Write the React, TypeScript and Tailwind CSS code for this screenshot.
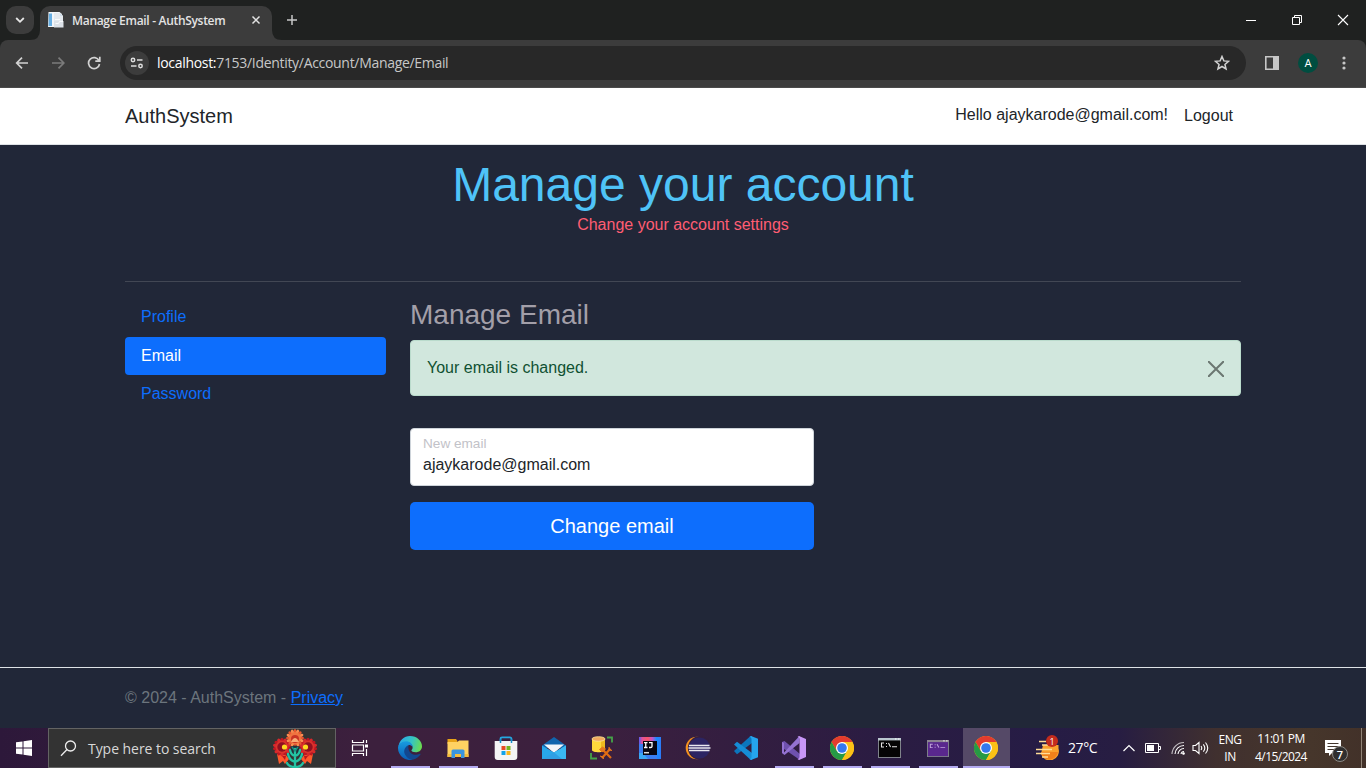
import React, { useId } from "react";

type Kids = { children: React.ReactNode };
const ui = "font-['Open_Sans','Noto_Sans',sans-serif]";

function Chrome() {
  return (
    <svg width="24" height="24" viewBox="0 0 24 24">
      <circle cx="12" cy="12" r="12" fill="#fbc116" />
      <path d="M12 6h10.4A12 12 0 0 0 1.6 6l5.2 9z" fill="#e33b2e" />
      <path d="M1.6 6A12 12 0 0 0 12 24l5.2-9-10.4 0z" fill="#269a45" />
      <path d="M22.4 6A12 12 0 0 1 12 24l5.2-9A6 6 0 0 0 12 6z" fill="#fbc116" />
      <circle cx="12" cy="12" r="6" fill="#fff" />
      <circle cx="12" cy="12" r="4.8" fill="#3478ee" />
    </svg>
  );
}

function Edge() {
  const id = useId();
  return (
    <svg width="24" height="24" viewBox="0 0 24 24">
      <defs>
        <linearGradient id={id + "a"} x1="0" y1=".3" x2="1" y2=".5">
          <stop offset="0" stopColor="#2aa8e8" /><stop offset=".55" stopColor="#35c4c4" /><stop offset="1" stopColor="#6bdc50" />
        </linearGradient>
        <linearGradient id={id + "b"} x1="0" y1="0" x2="0" y2="1">
          <stop offset="0" stopColor="#189ce0" /><stop offset="1" stopColor="#0a5cb5" />
        </linearGradient>
      </defs>
      <path d="M.5 10.500C1.300 4.500 6 0 12 0c7 0 12 5 12 10.300 0 3.900-3 6-6.300 6-2.600 0-4.300-.9-4.300-1.700 0-.7 1.200-1.200 1.200-3.100C14.600 8.200 11.500 6 8 6 4.500 6 2 8 .5 10.500z" fill={`url(#${id}a)`} />
      <path d="M0 12c0-3.500 3.700-6.700 8-6.700 3.500 0 6.600 2.300 6.600 5.600C13.500 9.500 12.400 9 11 9c-3 1.200-4.300 5-3 8.500 1 3 3.500 5.500 7 6.100A12 12 0 0 1 0 12z" fill={`url(#${id}b)`} />
      <path d="M10.400 9.300C6.500 11 5 15.500 7.300 19c2 3.300 5 4.900 8.200 4.500 2.800-.7 5.500-2.500 7.100-5.200.2-.5-.2-.7-.6-.5-5.500 2.700-12.500.2-11.600-8.500z" fill="#12478f" />
    </svg>
  );
}

function Folder() {
  return (
    <svg width="24" height="24" viewBox="0 0 24 24">
      <path d="M1.500 3H10l1.500 2v3h-10z" fill="#e8a317" />
      <path d="M1.500 6h10l1.500-1.500h9.500V21h-21z" fill="#ffd262" />
      <path d="M1.500 18h21v3h-21z" fill="#f6bc3c" />
      <path d="M5.500 22v-7q0-1.500 1.500-1.500h10q1.500 0 1.500 1.500v7H15v-4H9v4z" fill="#3a94df" />
    </svg>
  );
}

function Store() {
  return (
    <svg width="24" height="24" viewBox="0 0 24 24">
      <path d="M6.500 6.500V3q0-1.700 1.700-1.700h7.600q1.700 0 1.700 1.700v3.500" fill="none" stroke="#25a7e0" strokeWidth="1.700" />
      <path d="M.7 5h22.600v16q0 3-3 3H3.700q-3 0-3-3z" fill="#f4f4f4" />
      <path d="M6.500 3v4M17.500 3v4" stroke="#1590cc" strokeWidth="1.500" />
      <path d="M7.500 10h4v4h-4z" fill="#e84b23" /><path d="M12.500 10h4v4h-4z" fill="#75b51d" />
      <path d="M7.500 15h4v4h-4z" fill="#13a3e8" /><path d="M12.500 15h4v4h-4z" fill="#f7b51b" />
    </svg>
  );
}

function Mail() {
  return (
    <svg width="26" height="24" viewBox="0 0 26 24">
      <path d="M1 9.500 13 1l12 8.500V12H1z" fill="#1165ad" />
      <path d="M3 8.500h20L13 17z" fill="#f3f6f9" />
      <path d="M1 9.500 13 16.500 25 9.500V23H1z" fill="#28a7ea" />
      <path d="M13 16.500 25 9.500V23h-6z" fill="#3ab8f2" />
      <path d="M1 23 13 16.500 21 23z" fill="#2f9fe4" />
    </svg>
  );
}

function Database() {
  return (
    <svg width="26" height="26" viewBox="0 0 26 26">
      <path d="M3 4v11c0 3 13 3 13 0V4z" fill="#ffd83c" /><path d="M12 4h4v11q-1 2-4 2z" fill="#eeb91f" />
      <ellipse cx="9.500" cy="4" rx="6.500" ry="2.300" fill="#f1a95f" stroke="#fae391" strokeWidth=".8" />
      <path d="M18 2.500h5v5M2 18v5.500h6" fill="none" stroke="#45a348" strokeWidth="1.800" />
      <path d="m13 14 9 9M21 14 13 23" stroke="#de6c13" strokeWidth="2.200" />
      <path d="m10.500 14.500 3-2.500 3 2-3.500 3zM20 12v3l3 .5M11 21l3 1 .5 2" fill="#e5781d" stroke="#e5781d" strokeWidth="1" />
    </svg>
  );
}

function IntelliJ() {
  const id = useId();
  return (
    <svg width="22" height="22" viewBox="0 0 22 22">
      <defs>
        <linearGradient id={id} x1="0" y1="0" x2="1" y2="0">
          <stop offset="0" stopColor="#5b5bf0" /><stop offset=".15" stopColor="#e0529a" /><stop offset=".4" stopColor="#fb5668" /><stop offset=".6" stopColor="#c752c8" /><stop offset=".8" stopColor="#178bff" /><stop offset="1" stopColor="#2e7af6" />
        </linearGradient>
      </defs>
      <path d="M0 0h22v22H0z" fill={`url(#${id})`} />
      <path d="M0 7h4v11h14v4H0z" fill="#3b7df0" /><path d="M0 16h4l5 6H0z" fill="#39a8f4" />
      <path d="M4 4h14v14H4z" fill="#080611" />
      <path d="M5 5.600h3.500M6.750 5.600v4.900M5 10.500h3.500M10 5.600h3v3.900q0 1-1.500 1H10" fill="none" stroke="#fff" strokeWidth="1.300" />
      <path d="M5 15.700h5" stroke="#ddd" strokeWidth="1.500" />
    </svg>
  );
}

function Eclipse() {
  return (
    <svg width="26" height="24" viewBox="0 0 26 24">
      <circle cx="12" cy="12" r="11.300" fill="#f7941e" />
      <circle cx="14.600" cy="12" r="11.700" fill="#351f3f" />
      <circle cx="14.500" cy="12" r="10.500" fill="#2c2463" />
      <path d="M4 9.500h20.500M3.500 12h22M4 14.500h20.500" stroke="#e9e8f0" strokeWidth="1.600" />
    </svg>
  );
}

function VSCode() {
  return (
    <svg width="24" height="24" viewBox="0 0 24 24">
      <path d="m0 15 16-14.500L18 0v7L3 18.300z" fill="#0b76bd" />
      <path d="m0 8.500 3-2.700L18 17v7l-2-.7z" fill="#168dd6" />
      <path d="m17 0 7 2.700v18.600L17 24l-1.500-1q2 0 2-2V3q0-2-2-2z" fill="#25a4ee" />
    </svg>
  );
}

function VisualStudio() {
  return (
    <svg width="24" height="24" viewBox="0 0 24 24">
      <path d="m0 6 2.500-1 15.500 13v6L2 13v5l-2-1z" fill="#6f51ae" />
      <path d="M0 17V6l2 1v9.500L17.500 0v7L2.500 19z" fill="#9472d2" />
      <path d="M17 0 24 3v18l-7 3-1.500-1q2 0 2-2V3q0-2-2-2z" fill="#c896f7" />
    </svg>
  );
}

function Terminal({ purple = false }: { purple?: boolean }) {
  return (
    <svg width={purple ? 22 : 23} height={purple ? 17 : 20} viewBox="0 0 23 20" preserveAspectRatio="none">
      <path d="M0 0h23v20H0z" fill="#7f838a" /><path d="M0 0h23v2.500H0z" fill={purple ? "#8c8492" : "#b9c6ce"} />
      <path d="M1 2.500h21V19H1z" fill={purple ? "#59278e" : "#050505"} />
      <path d="M17 1h1.500m1.500 0h1.500" stroke="#fff" />
      <path d="M6 5H3.500v4H6M8 5.500h1M8 8.500h1M10.500 5l2 4M14 8.700h5" fill="none" stroke={purple ? "#c0a3dc" : "#e5e5e5"} strokeWidth="1.100" />
    </svg>
  );
}

function Flower() {
  const fan = (x: number, r: number) => (
    <g transform={`translate(${x} 18)`}>
      {Array.from({ length: 14 }, (_, i) => (
        <ellipse key={i} cy={-r * 0.72} rx={r * 0.2} ry={r * 0.3} fill={i % 2 ? "#d9282c" : "#c01622"} transform={`rotate(${i * 25.714})`} />
      ))}
      <circle r={r * 0.72} fill="#d9332c" /><circle r={r * 0.52} fill="#8f1020" />
    </g>
  );
  return (
    <svg width="44" height="39" viewBox="0 0 44 39">
      <path d="m4 25 9 1 3 4-4 5-2-3-4 3zM40 25l-9 1-3 4 4 5 2-3 4 3z" fill="#ff5a2c" />
      <path d="m9 27 4 0-1 4zM35 27l-4 0 1 4z" fill="#b9171d" />
      {fan(9, 9)}{fan(35, 9)}
      <g transform="translate(22 9)">
        {Array.from({ length: 16 }, (_, i) => <ellipse key={i} cy="-6.500" rx="1.500" ry="2.500" fill={i % 2 ? "#f98c50" : "#e9572f"} transform={`rotate(${i * 22.5})`} />)}
        <circle r="6" fill="#ef7440" /><circle r="4" cy="1" fill="#c93424" /><path d="M-4 4q4-8 8 0z" fill="#f9ab76" />
      </g>
      <circle cx="11.500" cy="18" r="2.600" fill="#ffd91f" /><circle cx="32.500" cy="18" r="2.600" fill="#ffd91f" />
      <path d="M18 18q4-3 8 0l1 8H17z" fill="#22303a" />
      <path d="M22 39V20M22 33q-6-2-7-8M22 33q6-2 7-8M22 27q-4-1-5-6M22 27q4-1 5-6M22 38q-6 0-8-4M22 38q6 0 8-4" fill="none" stroke="#24c4a4" strokeWidth="2.300" strokeLinecap="round" />
      <path d="m19 18 3 4 3-4" fill="none" stroke="#1b8f83" strokeWidth="1.500" />
    </svg>
  );
}

function Slot({ children, open = false, active = false }: Kids & { open?: boolean; active?: boolean }) {
  return (
    <div className="relative flex h-10 w-12 items-center justify-center">
      {active && <div className="absolute top-0 left-px h-10 w-[47px] bg-[#554967]" />}
      <div className="relative">{children}</div>
      {open && <div className={active ? "absolute bottom-0 left-px h-0.5 w-[47px] bg-[#b3aaf0]" : "absolute bottom-0 left-[5px] h-0.5 w-[39px] bg-[#b3aaf0]"} />}
    </div>
  );
}

function TabStrip() {
  return (
    <div className="flex h-10 items-start bg-[#1f2120]">
      <div className="mt-1.5 ml-1.5 flex h-7 w-7 items-center justify-center rounded-[10px] bg-[#3c3c3c]">
        <svg width="10" height="8" viewBox="0 0 10 8"><path d="m1.200 2 3.800 3.800L8.800 2" fill="none" stroke="#e6e6e6" strokeWidth="1.800" /></svg>
      </div>
      <div className="relative mt-1.5 ml-1.5 flex h-[34px] w-[232px] items-center rounded-t-[10px] bg-[#3c3c3c] pb-[6px] pl-2">
        <svg className="absolute bottom-0 -left-2.5" width="10" height="10"><path d="M10 0v10H0Q10 10 10 0" fill="#3c3c3c" /></svg>
        <svg className="absolute -right-2.5 bottom-0" width="10" height="10"><path d="M0 0v10h10Q0 10 0 0" fill="#3c3c3c" /></svg>
        <svg width="16" height="16" viewBox="0 0 16 16">
          <path d="M.5 0h11L14 2v13H0z" fill="#f3f6f9" /><path d="M1 1.500h3V14H.5z" fill="#67aee2" />
          <path d="M6 1h6l3 3v5H6z" fill="#e4e9ee" /><path d="M12 1v3h3" fill="#cfdbe6" />
          <path d="M6 9h9.500v6.500H6z" fill="#dde2e8" /><path d="M7.500 11.500h3l1-2H15M7 7.500h5" fill="none" stroke="#f9fbfc" />
        </svg>
        <span className={`${ui} ml-2 w-[154px] pt-0.5 text-[12px] leading-4 font-semibold tracking-[-0.31px] whitespace-nowrap text-[#e3e3e3]`}>Manage Email - AuthSystem</span>
        <svg className="ml-[25px]" width="10" height="10" viewBox="0 0 10 10"><path d="m1.500 1.500 7 7m0-7-7 7" stroke="#e3e3e3" strokeWidth="1.500" /></svg>
      </div>
      <svg className="mt-[15px] ml-[15px]" width="10" height="10" viewBox="0 0 10 10"><path d="M5 0v10M0 5h10" stroke="#c7c7c7" strokeWidth="1.500" /></svg>
      <div className="mt-[14px] mr-[17px] ml-auto flex gap-[34px]">
        <svg width="12" height="12"><path d="M1 6.500h10" stroke="#fff" /></svg>
        <svg width="12" height="12" fill="none" stroke="#fff"><path d="M1.500 3.500h7v7h-7zM3.500 3.500v-2h7v7h-2" /></svg>
        <svg width="12" height="12"><path d="m1 1 10 10M11 1 1 11" stroke="#fff" strokeWidth="1.100" /></svg>
      </div>
    </div>
  );
}

function Toolbar() {
  return (
    <div className="bg-[#1f2120]">
      <div className="flex h-12 items-center rounded-t-lg border-b border-[#4a4a4a] bg-[#3c3c3c] pb-px">
        <svg className="ml-[15px]" width="14" height="12" viewBox="0 0 14 12"><path d="M13 6H1.500M7 .7 1.700 6 7 11.300" fill="none" stroke="#d2d2d2" strokeWidth="1.700" /></svg>
        <svg className="ml-[23px]" width="14" height="12" viewBox="0 0 14 12"><path d="M0 6h11.500M6.500.7 11.800 6 6.500 11.300" fill="none" stroke="#7b7b7b" strokeWidth="1.700" /></svg>
        <svg className="ml-[21px]" width="14" height="14" viewBox="0 0 14 14"><path d="M12 4.700A5.500 5.500 0 1 0 12.500 8M12.800.7v4.500H8.300" fill="none" stroke="#d2d2d2" strokeWidth="1.700" /></svg>
        <div className="ml-[19px] flex h-[34px] w-[1126px] items-center rounded-full bg-[#282828] pl-[5px]">
          <div className="flex h-6 w-6 items-center justify-center rounded-full bg-[#3c3c3c]">
            <svg width="14" height="12" viewBox="0 0 14 12" fill="none" stroke="#dedede" strokeWidth="1.500"><circle cx="3" cy="3" r="1.700" /><path d="M7 3h5.500M1 9h5.500" /><circle cx="10.500" cy="9" r="1.700" /></svg>
          </div>
          <span className={`${ui} ml-2 text-[14px] leading-5 tracking-[-0.31px] text-[#c7c7c7]`}><span className="text-white">localhost:</span>7153/Identity/Account/Manage/Email</span>
          <svg className="mr-4 ml-auto" width="16" height="16" viewBox="0 0 16 16"><path d="m8 1.500 1.850 4.400 4.700.4-3.600 3.100 1.100 4.600L8 11.500 3.950 14l1.100-4.600-3.600-3.100 4.700-.4z" fill="none" stroke="#d2d2d2" strokeWidth="1.500" /></svg>
        </div>
        <svg className="ml-[18px]" width="16" height="16" viewBox="0 0 16 16"><path d="M1.800 1.800h12.400v12.400H1.800z" fill="none" stroke="#c7c7c7" strokeWidth="1.600" /><path d="M9 1h6v14H9z" fill="#c7c7c7" /></svg>
        <div className="ml-[18px] flex h-5 w-5 items-center justify-center rounded-full bg-[#004d40] font-['Roboto',sans-serif] text-[11px] leading-none text-white">A</div>
        <svg className="ml-6" width="4" height="16" fill="#c7c7c7"><circle cx="2" cy="3" r="1.600" /><circle cx="2" cy="8" r="1.600" /><circle cx="2" cy="13" r="1.600" /></svg>
      </div>
    </div>
  );
}

function Page() {
  return (
    <div className="flex h-[640px] flex-col bg-[#212738] font-['Liberation_Sans',Arial,sans-serif] text-[16px] leading-6">
      <header className="h-[57px] border-b border-[#dee2e6] bg-white">
        <div className="mx-auto flex w-[1116px] text-[#212529]">
          <a className="pt-[13px] text-[20px] leading-[30px]">AuthSystem</a>
          <span className="mt-[15px] ml-auto">Hello ajaykarode@gmail.com!</span>
          <button className="mt-4 mr-2 ml-4 self-start leading-6">Logout</button>
        </div>
      </header>
      <main className="mx-auto h-[522px] w-[1116px]">
        <div className="h-[136px] pt-[11px] text-center">
          <h1 className="text-[48px] leading-[57px] text-[#4fc3f7]">Manage your account</h1>
          <h2 className="text-[#ff5d73]">Change your account settings</h2>
        </div>
        <div className="h-px bg-[#424754]" />
        <div className="flex gap-6 pt-4">
          <nav className="flex w-[261px] flex-col text-[#0d6efd]">
            <a className="flex h-[39px] items-start px-4 pt-[7px]">Profile</a>
            <a className="flex h-[38px] items-start rounded-[4px] bg-[#0d6efd] px-4 pt-[7px] text-white">Email</a>
            <a className="flex h-[38px] items-start px-4 pt-[7px]">Password</a>
          </nav>
          <section className="w-[831px]">
            <h3 className="text-[28px] leading-[34px] text-[#a39fa9]">Manage Email</h3>
            <div className="mt-2 flex h-14 items-center justify-between rounded-[4px] border border-[#badbcc] bg-[#d1e7dd] px-4 text-[#0f5132]">
              <span>Your email is changed.</span>
              <svg className="mt-0.5" width="16" height="16" viewBox="0 0 16 16"><path d="m.7.7 14.600 14.600m0-14.600L.7 15.300" stroke="#6b7771" strokeWidth="2" strokeLinecap="round" /></svg>
            </div>
            <div className="mt-8 w-[404px]">
              <div className="h-[58px] rounded-[4px] border border-[#ced4da] bg-white px-3 pt-[5px]">
                <div className="text-[13.600px] leading-[20px] text-[#c2c2c8]">New email</div>
                <div className="leading-[21px] text-[#212529]">ajaykarode@gmail.com</div>
              </div>
              <button className="mt-4 h-12 w-full rounded-[5px] bg-[#0d6efd] text-[20px] leading-[30px] text-white">Change email</button>
            </div>
          </section>
        </div>
      </main>
      <footer className="h-[61px] border-t border-[#dee2e6] text-[#6c757d]">
        <div className="mx-auto w-[1116px] pt-[18px]">© 2024 - AuthSystem - <a className="text-[#0d6efd] underline">Privacy</a></div>
      </footer>
    </div>
  );
}

function Tray() {
  return (
    <div className={`${ui} ml-[24px] flex flex-1 items-center text-white`}>
      <div className="relative h-6 w-[26px]">
        <svg width="26" height="24" viewBox="0 0 26 24"><path d="M9 9h15.500v3.500A9 9 0 0 1 7 18z" fill="#f9a02c" /><path d="M7 16h17a9 9 0 0 1-15 5z" fill="#f0801a" /><path d="M5 5.500h7M8 9h7M2 13.500h16M2 17.500h14M8 21h6" stroke="#ffdc96" strokeWidth="1.600" /></svg>
        <div className="absolute -top-px left-[12px] flex h-3 w-3 items-center justify-center rounded-full bg-[#c42b1c] text-[9px] leading-none">1</div>
      </div>
      <span className="ml-[8px] w-[54px] text-[14px] leading-5 tracking-[-0.4px]">27°C</span>
      <svg className="ml-px" width="12" height="8"><path d="m.5 7 5.500-5.500L11.500 7" fill="none" stroke="#fff" strokeWidth="1.200" /></svg>
      <svg className="ml-[10px]" width="16" height="10"><path d="M.5.500h13v9H.5zM14 3.500h1.500v3H14" fill="none" stroke="#fff" /><path d="M2 2h7v6H2z" fill="#fff" /></svg>
      <svg className="ml-[10px]" width="15" height="14" fill="none" stroke="#fff" strokeWidth="1.100"><path d="M1 13A12 12 0 0 1 13 1.500" opacity=".7" /><path d="M4 13a9 9 0 0 1 9-8.500M7 13a6 6 0 0 1 6-5.500M10 13a3 3 0 0 1 3-2.500" /><circle cx="12.500" cy="12.500" r=".8" fill="#fff" /></svg>
      <svg className="ml-1.5" width="17" height="14" fill="none" stroke="#fff" strokeWidth="1.100"><path d="M1 4.500h2.500L7 1.500v11L3.500 9.500H1zM9 5q1.500 2 0 4M11.300 3.300q3 3.700 0 7.400M13.500 1.500q4.500 5.500 0 11" /></svg>
      <div className="ml-[6px] flex w-[30px] flex-col items-center text-[12px] leading-[17px] tracking-[-0.5px]"><span>ENG</span><span>IN</span></div>
      <div className="ml-[6px] flex w-[60px] flex-col items-center text-[12px] leading-[18px] tracking-[-0.55px] whitespace-nowrap"><span>11:01 PM</span><span>4/15/2024</span></div>
      <div className="relative ml-[13px] h-6 w-6">
        <svg width="24" height="24"><path d="M1 4h16v13H8l-3 3v-3H1z" fill="#fff" /><path d="M3.500 7.500h11M3.500 10.500h11M3.500 13.500h7" stroke="#44372f" /></svg>
        <div className="absolute top-[10px] left-[8px] flex h-4 w-4 items-center justify-center rounded-full border border-[#8b8985] bg-[#302f2f] text-[11px] leading-none font-semibold">7</div>
      </div>
      <div className="mr-1 ml-auto h-10 w-px bg-[#918477]" />
    </div>
  );
}

function Taskbar() {
  return (
    <div className="flex h-10 bg-[linear-gradient(90deg,#2d183a_0%,#3c203d_27%,#3c203e_43%,#2b1c42_64%,#261c45_76%,#271d42_82%,#40302f_89%,#46362b_96%,#423129_100%)]">
      <div className="flex w-12 items-center justify-center"><svg width="16" height="16" fill="#fff"><path d="M0 2.300 6.500 1.400v6H0zM7.500 1.200 16 0v7.400H7.500zM0 8.500h6.500v6.100L0 13.700zM7.500 8.500H16V16l-8.500-1.200z" /></svg></div>
      <div className="flex h-10 w-72 items-center border border-[#636363] bg-[#333]">
        <svg className="ml-[11px]" width="17" height="17" fill="none" stroke="#eee" strokeWidth="1.300"><circle cx="10.500" cy="6" r="5" /><path d="M7 9.500 1 15.800" /></svg>
        <span className={`${ui} ml-[11px] w-[130px] pt-0.5 text-[14px] leading-5 tracking-[-0.05px] whitespace-nowrap text-[#d8d8d8]`}>Type here to search</span>
        <div className="ml-[55px]"><Flower /></div>
      </div>
      <div className="flex w-[50px] items-center justify-center pr-0.5"><svg width="18" height="16" fill="none" stroke="#fff" strokeWidth="1.200"><path d="M1.500 0v2.500h11V0M1.500 16v-2.500h11V16M1.500 5h11v6h-11zM15.500 0v3M15.500 9v7" /><path d="M14 4.500h3v3h-3z" fill="#fff" stroke="none" /></svg></div>
      <Slot open><Edge /></Slot><Slot open><Folder /></Slot><Slot><Store /></Slot><Slot><Mail /></Slot>
      <Slot><Database /></Slot><Slot><IntelliJ /></Slot><Slot><Eclipse /></Slot><Slot><VSCode /></Slot>
      <Slot open><VisualStudio /></Slot><Slot open><Chrome /></Slot><Slot open><div className="pr-0.5"><Terminal /></div></Slot>
      <Slot open><Terminal purple /></Slot><Slot open active><Chrome /></Slot>
      <Tray />
    </div>
  );
}

export default function App() {
  return (
    <div className="flex h-[768px] w-[1366px] flex-col overflow-hidden">
      <TabStrip />
      <Toolbar />
      <Page />
      <Taskbar />
    </div>
  );
}
